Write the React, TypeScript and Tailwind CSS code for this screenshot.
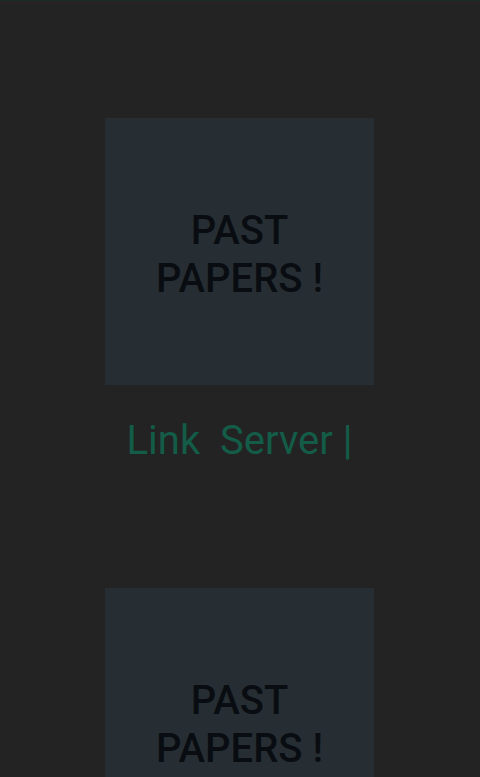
const items = ["a", "b"];

function PaperCard() {
  return (
    <div className="flex h-[267px] w-[269px] items-center justify-center bg-[#262e33] pt-[7px]">
      <p className="text-center font-['Roboto',sans-serif] text-[40px] font-medium leading-[48px] text-[#090d11]">
        PAST
        <br />
        PAPERS !
      </p>
    </div>
  );
}

export default function App() {
  return (
    <div className="h-[777px] overflow-hidden bg-[#232323]">
      <div className="h-[2px] bg-[#1d2825]" />
      <div className="h-[2px] bg-[#292224]" />
      <div className="flex flex-col items-center pt-[114px] pr-[1px]">
        {items.map((id) => (
          <div className="flex flex-col items-center" key={id}>
            <PaperCard />
            <p className="mt-[32px] mb-[124px] font-['Roboto',sans-serif] text-[40px] leading-[47px] text-[#135c48]">
              Link&nbsp;&nbsp;Server |
            </p>
          </div>
        ))}
      </div>
    </div>
  );
}
